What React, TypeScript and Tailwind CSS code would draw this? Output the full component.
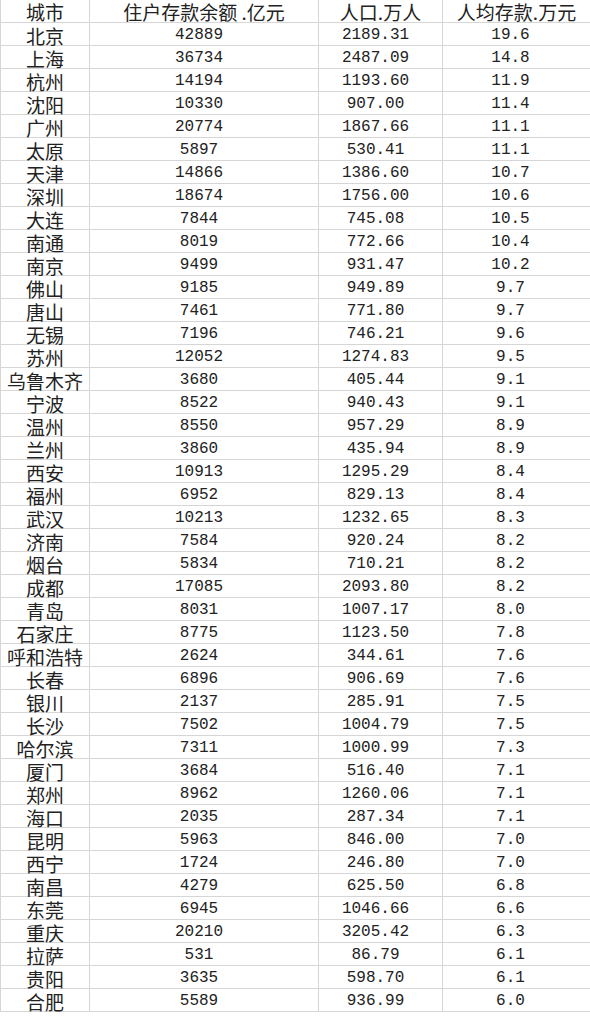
const rows: [string, string, string, string][] = [
  ["北京", "42889", "2189.31", "19.6"],
  ["上海", "36734", "2487.09", "14.8"],
  ["杭州", "14194", "1193.60", "11.9"],
  ["沈阳", "10330", "907.00", "11.4"],
  ["广州", "20774", "1867.66", "11.1"],
  ["太原", "5897", "530.41", "11.1"],
  ["天津", "14866", "1386.60", "10.7"],
  ["深圳", "18674", "1756.00", "10.6"],
  ["大连", "7844", "745.08", "10.5"],
  ["南通", "8019", "772.66", "10.4"],
  ["南京", "9499", "931.47", "10.2"],
  ["佛山", "9185", "949.89", "9.7"],
  ["唐山", "7461", "771.80", "9.7"],
  ["无锡", "7196", "746.21", "9.6"],
  ["苏州", "12052", "1274.83", "9.5"],
  ["乌鲁木齐", "3680", "405.44", "9.1"],
  ["宁波", "8522", "940.43", "9.1"],
  ["温州", "8550", "957.29", "8.9"],
  ["兰州", "3860", "435.94", "8.9"],
  ["西安", "10913", "1295.29", "8.4"],
  ["福州", "6952", "829.13", "8.4"],
  ["武汉", "10213", "1232.65", "8.3"],
  ["济南", "7584", "920.24", "8.2"],
  ["烟台", "5834", "710.21", "8.2"],
  ["成都", "17085", "2093.80", "8.2"],
  ["青岛", "8031", "1007.17", "8.0"],
  ["石家庄", "8775", "1123.50", "7.8"],
  ["呼和浩特", "2624", "344.61", "7.6"],
  ["长春", "6896", "906.69", "7.6"],
  ["银川", "2137", "285.91", "7.5"],
  ["长沙", "7502", "1004.79", "7.5"],
  ["哈尔滨", "7311", "1000.99", "7.3"],
  ["厦门", "3684", "516.40", "7.1"],
  ["郑州", "8962", "1260.06", "7.1"],
  ["海口", "2035", "287.34", "7.1"],
  ["昆明", "5963", "846.00", "7.0"],
  ["西宁", "1724", "246.80", "7.0"],
  ["南昌", "4279", "625.50", "6.8"],
  ["东莞", "6945", "1046.66", "6.6"],
  ["重庆", "20210", "3205.42", "6.3"],
  ["拉萨", "531", "86.79", "6.1"],
  ["贵阳", "3635", "598.70", "6.1"],
  ["合肥", "5589", "936.99", "6.0"],
];

const cjk = "font-['Noto_Sans_CJK_SC',sans-serif] text-[19px] leading-[19px]";
const mono = "font-['Liberation_Mono','Noto_Sans_CJK_SC',monospace] text-[16px] leading-[16px]";
const cell = "h-[23px] border-b border-r border-[#d6d6d6] flex items-center justify-center whitespace-nowrap";

const App = () => {
  return (
    <div className="w-[590px] min-h-[1017px] bg-white text-[#222] overflow-hidden">
      <div className="grid grid-cols-[89px_229px_124px_148px] border-l border-[#d6d6d6]">
        {/* header */}
        <div className={`${cell} ${cjk} pt-[1px]`}>城市</div>
        <div className={`${cell} ${cjk} pt-[1px]`}>住户存款余额&nbsp;.亿元</div>
        <div className={`${cell} ${cjk} pt-[1px]`}>人口.万人</div>
        <div className={`${cell} ${cjk} pt-[1px]`}>人均存款.万元</div>

        {rows.map(([city, dep, pop, per]) => (
          <div key={city} className="contents">
            <div className={`${cell} ${cjk} pt-[2px]`}>{city}</div>
            <div className={`${cell} ${mono} pt-[2px] pr-[10px]`}>{dep}</div>
            <div className={`${cell} ${mono} pt-[2px] pr-[10px]`}>{pop}</div>
            <div className={`${cell} ${mono} pt-[2px] pr-[12px]`}>{per}</div>
          </div>
        ))}
      </div>
    </div>
  );
};

export default App;
